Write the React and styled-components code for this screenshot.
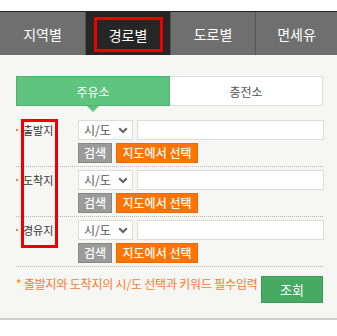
import React from "react";
import styled, { createGlobalStyle } from "styled-components";

const GlobalStyle = createGlobalStyle`
  html, body { margin: 0; padding: 0; background: #fff; }
  body { font-family: "Noto Sans CJK KR", "Noto Sans", sans-serif; }
  * { box-sizing: border-box; }
`;

const Page = styled.div`
  width: 337px;
  padding-top: 11px;
`;

const TabBar = styled.div`
  display: grid;
  grid-template-columns: 85px 85px 85px 82px;
  height: 44px;
  border-top: 1px solid #222;
  background: #6f6f6f;
`;

const Tab = styled.div`
  display: flex;
  align-items: center;
  justify-content: center;
  color: #fff;
  font-size: 14px;
  background: ${(p) => (p.$active ? "#262626" : "#6f6f6f")};
  border-left: ${(p) => (p.$first ? "none" : "1px solid #555")};
`;

const Marked = styled.span`
  display: flex;
  align-items: center;
  justify-content: center;
  width: 69px;
  height: 35px;
  margin-top: 2px;
  border: 3px solid #ee0000;
`;

const Panel = styled.div`
  background: #f6f6f4;
  padding: 21px 14px 15px 16px;
  border-bottom: 2px solid #cfcfcf;
`;

const Toggle = styled.div`
  display: grid;
  grid-template-columns: 154px 1fr;
  height: 30px;
`;

const ToggleItem = styled.div`
  position: relative;
  display: flex;
  align-items: center;
  justify-content: center;
  font-size: 12px;
  color: ${(p) => (p.$on ? "#fff" : "#555")};
  background: ${(p) => (p.$on ? "#5ec47e" : "#fff")};
  border: 1px solid ${(p) => (p.$on ? "#50b26f" : "#dddddd")};
  border-left: ${(p) => (p.$on ? "1px solid #50b26f" : "none")};

  ${(p) =>
    p.$on &&
    `&::after {
      content: "";
      position: absolute;
      left: 50%;
      bottom: -7px;
      margin-left: -6px;
      border-left: 6px solid transparent;
      border-right: 6px solid transparent;
      border-top: 6px solid #5ec47e;
    }`}
`;

const Rows = styled.div`
  position: relative;
  margin-top: 11px;
`;

const Row = styled.div`
  display: grid;
  grid-template-columns: 62px 1fr;
  padding: 3px 0;
  border-bottom: 1px dotted #b5b5b5;

  &:last-child {
    padding-bottom: 6px;
  }
`;

const Label = styled.div`
  position: relative;
  padding-left: 7px;
  font-size: 11px;
  line-height: 20px;
  color: #333;

  &::before {
    content: "";
    position: absolute;
    left: 0;
    top: 9px;
    width: 2px;
    height: 2px;
    background: #ff7a1a;
  }
`;

const LabelMark = styled.div`
  position: absolute;
  left: 5px;
  top: 2px;
  width: 37px;
  height: 129px;
  border: 3px solid #ee0000;
  pointer-events: none;
`;

const Controls = styled.div`
  display: flex;
  flex-direction: column;
  gap: 3px;
`;

const Line = styled.div`
  display: flex;
  gap: 4px;
  height: 20px;
`;

const SelectWrap = styled.div`
  position: relative;
  width: 55px;
  height: 20px;
  flex: none;
`;

const Select = styled.select`
  display: block;
  appearance: none;
  -webkit-appearance: none;
  width: 100%;
  height: 20px;
  margin: 0;
  padding: 0 0 0 5px;
  border: 1px solid #dcdcdc;
  background: #fff;
  color: #555;
  font-family: inherit;
  font-size: 12px;
  line-height: 18px;
  border-radius: 0;
  outline: none;
`;

const Chevron = styled.svg`
  position: absolute;
  right: 5px;
  top: 7px;
  width: 10px;
  height: 7px;
  pointer-events: none;
`;

const TextInput = styled.input`
  display: block;
  flex: 1;
  min-width: 0;
  height: 20px;
  margin: 0;
  padding: 0 4px;
  border: 1px solid #dcdcdc;
  background: #fff;
  outline: none;
`;

const SmallButton = styled.button`
  display: block;
  height: 20px;
  width: ${(p) => p.$w}px;
  margin: 0;
  padding: 0;
  border: 1px solid ${(p) => (p.$orange ? "#e86a00" : "#878787")};
  background: ${(p) => (p.$orange ? "#ff7400" : "#9b9b9b")};
  color: #fff;
  font-family: inherit;
  font-size: 12px;
  font-weight: 500;
  line-height: 18px;
  border-radius: 0;
`;

const Footer = styled.div`
  display: flex;
  justify-content: space-between;
  align-items: flex-start;
  padding-top: 9px;
`;

const Note = styled.div`
  font-size: 12px;
  line-height: 16px;
  color: #ff7a2a;
  margin-top: 0;
  letter-spacing: -0.2px;
  white-space: nowrap;
`;

const SubmitButton = styled.button`
  display: block;
  width: 62px;
  height: 27px;
  margin: 0;
  padding: 0;
  border: 1px solid #3c9957;
  background: #47aa62;
  color: #fff;
  font-family: inherit;
  font-size: 13px;
  border-radius: 0;
`;

const rows = ["출발지", "도착지", "경유지"];

export default function App() {
  return (
    <Page>
      <GlobalStyle />
      <TabBar>
        <Tab $first>지역별</Tab>
        <Tab $active>
          <Marked>경로별</Marked>
        </Tab>
        <Tab>도로별</Tab>
        <Tab>면세유</Tab>
      </TabBar>
      <Panel>
        <Toggle>
          <ToggleItem $on>주유소</ToggleItem>
          <ToggleItem>충전소</ToggleItem>
        </Toggle>
        <Rows>
          {rows.map((r) => (
            <Row key={r}>
              <Label>{r}</Label>
              <Controls>
                <Line>
                  <SelectWrap>
                    <Select defaultValue="">
                      <option value="">시/도</option>
                    </Select>
                    <Chevron viewBox="0 0 10 7">
                      <path d="M1.2 1.2 L5 5 L8.8 1.2" fill="none" stroke="#666" strokeWidth="2.2" />
                    </Chevron>
                  </SelectWrap>
                  <TextInput type="text" />
                </Line>
                <Line>
                  <SmallButton $w={34}>검색</SmallButton>
                  <SmallButton $w={82} $orange>지도에서 선택</SmallButton>
                </Line>
              </Controls>
            </Row>
          ))}
          <LabelMark />
        </Rows>
        <Footer>
          <Note>* 출발지와 도착지의 시/도 선택과 키워드 필수입력</Note>
          <SubmitButton>조회</SubmitButton>
        </Footer>
      </Panel>
    </Page>
  );
}
